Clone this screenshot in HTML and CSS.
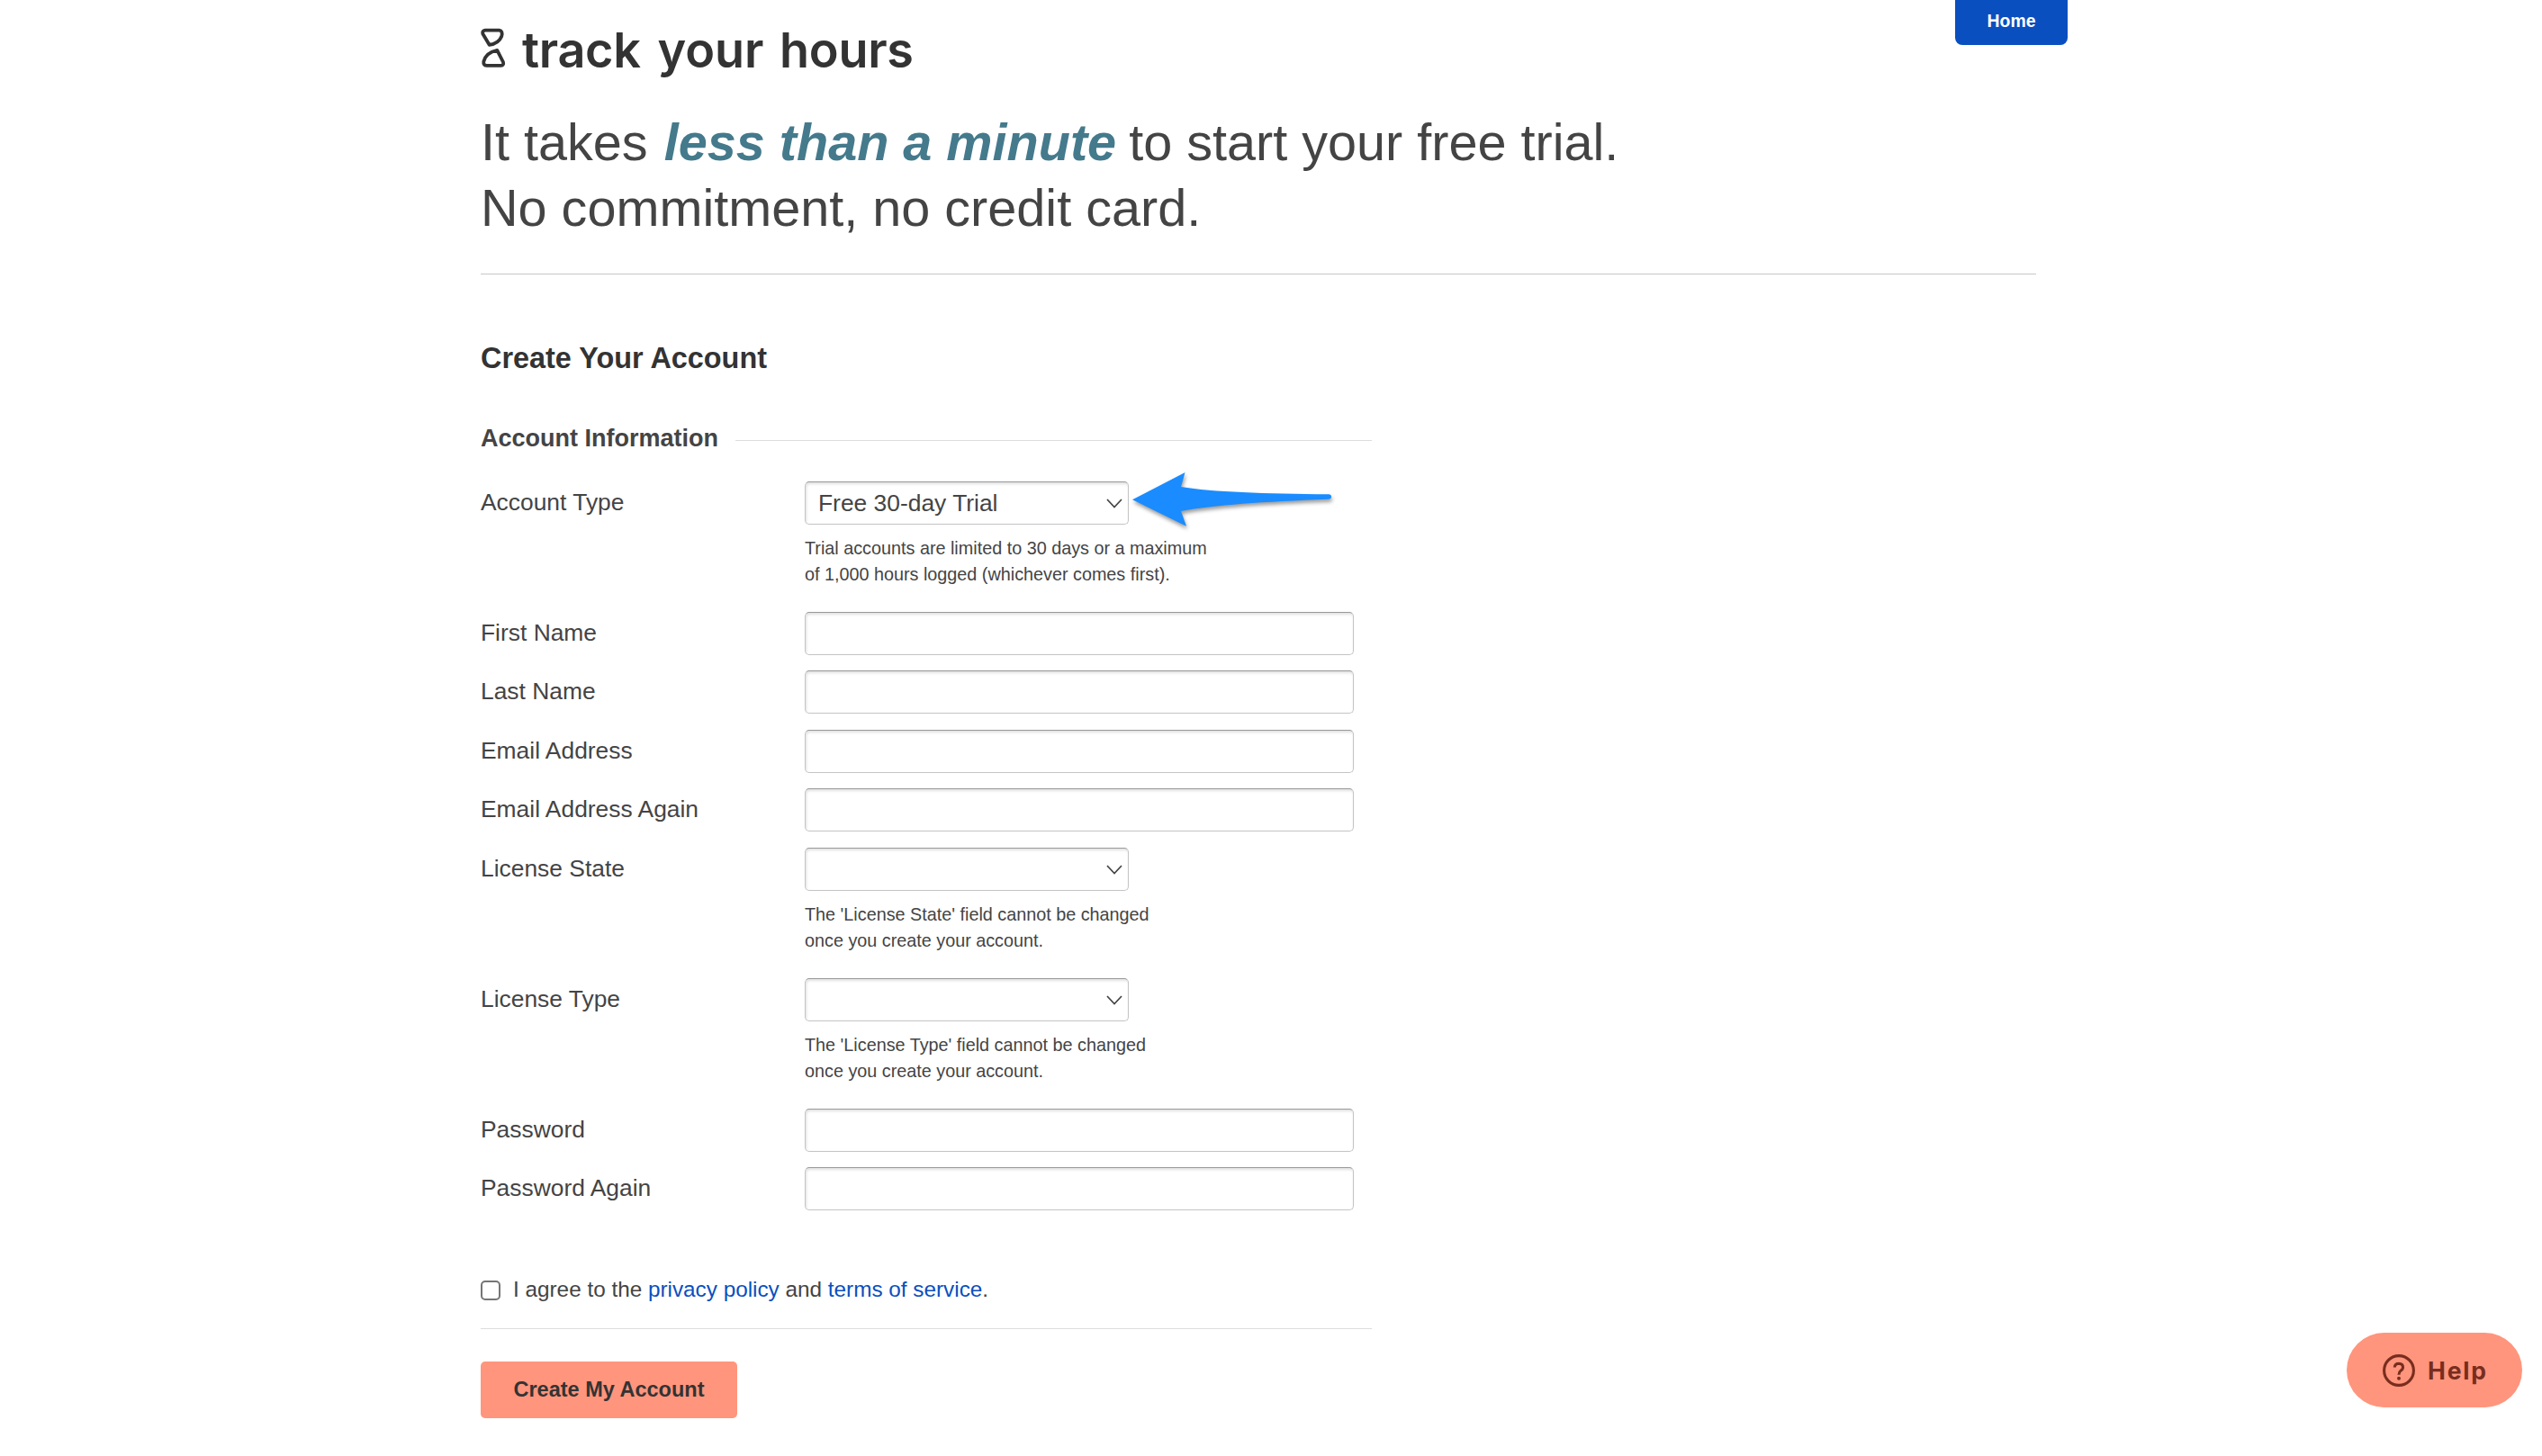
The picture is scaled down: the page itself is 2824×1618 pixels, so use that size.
FILE: index.html
```html
<!DOCTYPE html>
<html lang="en">
<head>
  <meta charset="UTF-8" />
  <title>Track Your Hours - Create Your Account</title>
  <meta name="viewport" content="width=device-width, initial-scale=1" />
  <link rel="stylesheet" href="styles.css">
</head>
<body>
  <div class="container">
    <header>
      <a class="home" href="#">Home</a>
      <svg class="logo" width="490" height="74" viewBox="0 -10 490 74">
        <g fill="none" stroke="#333" stroke-width="3.8" stroke-linejoin="round">
          <path d="M5 5.7H20.5Q25 6.5 23.2 12.5Q20 20.5 9.6 21.8L2.3 9.5Q1.5 6.2 5 5.7Z" />
          <path d="M18.3 27.8L25 41Q26 44.6 22.5 44.9H6.5Q2.8 44.5 3.3 40.5Q5.5 30.5 18.3 27.8Z" />
        </g>
        <text y="46.5"><tspan x="46" textLength="132">track</tspan> <tspan x="196.5" textLength="118">your</tspan> <tspan x="332" textLength="149">hours</tspan></text>
      </svg>
      <h1>It takes <em>less than a minute</em> to start your free trial.<br>No commitment, no credit card.</h1>
    </header>

    <form id="signup-form" action="#" method="POST">
      <h2>Create Your Account</h2>
      <h3>Account Information</h3>

      <div class="row">
        <label for="accounttype">Account Type</label>
        <div class="field">
          <div class="select">
            <select id="accounttype" name="accounttype">
              <option selected>Free 30-day Trial</option>
            </select>
            <svg class="chevron" width="18" height="11" viewBox="0 0 18 11"><path d="M1 1L9 9.5L17 1" /></svg>
            <svg class="arrow" width="236" height="76" viewBox="0 0 236 76">
              <path d="M5 31.3L63.5 1L59 17C95 23 150 24.5 223 25.3Q226 25.5 226 28Q226 30.5 223 30.7C150 33.5 95 37 59 44L65 60.7Z" />
            </svg>
          </div>
          <p class="hint">Trial accounts are limited to 30 days or a maximum<br>of 1,000 hours logged (whichever comes first).</p>
        </div>
      </div>
      <div class="row">
        <label for="firstname">First Name</label>
        <input type="text" id="firstname" name="firstname" />
      </div>
      <div class="row">
        <label for="lastname">Last Name</label>
        <input type="text" id="lastname" name="lastname" />
      </div>
      <div class="row">
        <label for="email">Email Address</label>
        <input type="email" id="email" name="email" />
      </div>
      <div class="row">
        <label for="email2">Email Address Again</label>
        <input type="email" id="email2" name="email2" />
      </div>
      <div class="row">
        <label for="state">License State</label>
        <div class="field">
          <div class="select">
            <select id="state" name="state"><option></option></select>
            <svg class="chevron" width="18" height="11" viewBox="0 0 18 11"><path d="M1 1L9 9.5L17 1" /></svg>
          </div>
          <p class="hint">The 'License State' field cannot be changed<br>once you create your account.</p>
        </div>
      </div>
      <div class="row">
        <label for="licensetype">License Type</label>
        <div class="field">
          <div class="select">
            <select id="licensetype" name="licensetype"><option></option></select>
            <svg class="chevron" width="18" height="11" viewBox="0 0 18 11"><path d="M1 1L9 9.5L17 1" /></svg>
          </div>
          <p class="hint">The 'License Type' field cannot be changed<br>once you create your account.</p>
        </div>
      </div>
      <div class="row">
        <label for="password">Password</label>
        <input type="password" id="password" name="password" />
      </div>
      <div class="row">
        <label for="password2">Password Again</label>
        <input type="password" id="password2" name="password2" />
      </div>

      <div class="agree">
        <input type="checkbox" id="agree" name="agree" />
        <label for="agree">I agree to the <a href="#">privacy policy</a> and <a href="#">terms of service</a>.</label>
      </div>

      <button type="submit">Create My Account</button>
    </form>
  </div>

  <a class="help" href="#">
    <svg width="36" height="36" viewBox="0 0 36 36">
      <circle cx="18" cy="18" r="16.4" />
      <path d="M13.3 14.5Q13.5 10.2 18 10.2Q22.5 10.4 22.5 14.2Q22.5 16.6 20 18.2Q18 19.6 18 22.8" />
      <circle class="dot" cx="18" cy="26.8" r="2" />
    </svg>
    <svg class="help-text" width="66" height="36" viewBox="0 0 66 36"><text x="0" y="28" textLength="65">Help</text></svg>
  </a>
</body>
</html>
```
FILE: styles.css
```css
* {
  box-sizing: border-box;
}
body {
  font-family: "Liberation Sans", Arial, sans-serif;
  background: #fff;
  color: #444;
  margin: 0;
  font-size: 26.4px;
}
h1, h2, h3, p {
  margin: 0;
}
a {
  color: #0a4fbf;
  text-decoration: none;
}
.container {
  width: 1728px;
  margin-left: 534px;
}
header {
  position: relative;
  padding: 18px 0 36px;
  border-bottom: 1px solid #c8c8c8;
}
.home {
  position: absolute;
  top: 0;
  right: -35px;
  width: 125px;
  height: 50px;
  border-radius: 0 0 8px 8px;
  background: #0a4fbf;
  color: #fff;
  font-size: 19.4px;
  font-weight: 700;
  line-height: 47px;
  text-align: center;
}
.logo {
  display: block;
  margin-bottom: 30px;
  overflow: visible;
}
.logo text {
  font-family: Inter, sans-serif;
  font-size: 54px;
  font-weight: 600;
  fill: #333;
}
h1 {
  font-size: 57.6px;
  line-height: 73px;
  font-weight: 400;
}
h1 em {
  margin: 0 -2px 0 2px;
  font-weight: 700;
  color: #447a8c;
}
form {
  width: 990px;
  padding-top: 73px;
}
h2 {
  font-size: 32.4px;
  line-height: 40px;
  color: #333;
}
h3 {
  display: flex;
  align-items: center;
  margin: 52px 0 31px;
  font-size: 27px;
  line-height: 34px;
}
h3::after {
  content: "";
  flex: 1;
  height: 1px;
  margin: 5px 0 0 19px;
  background: #ddd;
}
.row {
  display: flex;
  align-items: flex-start;
  margin-bottom: 17.5px;
}
.row label {
  width: 360px;
  line-height: 46px;
}
.row input,
select {
  appearance: none;
  width: 610px;
  height: 48px;
  margin: 0;
  padding: 0 14px;
  border: 1px solid #c4c4c4;
  border-top-color: #999;
  border-radius: 5px;
  background: #fff;
  box-shadow: inset 1px 2px 3px rgba(0,0,0,0.12);
  color: #444;
  font: inherit;
}
.select {
  position: relative;
  width: 360px;
  height: 48px;
}
.select select {
  width: 360px;
}
.chevron {
  position: absolute;
  right: 7px;
  top: 19px;
  fill: none;
  stroke: #444;
  stroke-width: 1.7;
}
.arrow {
  position: absolute;
  left: 359px;
  top: -11px;
  fill: #1a8cff;
  filter: drop-shadow(1px 3px 2px rgba(0,0,0,0.4));
}
.hint {
  margin: 12px 0 10.3px;
  font-size: 19.8px;
  line-height: 28.6px;
}
.agree {
  display: flex;
  margin-top: 72.5px;
  padding-bottom: 28.5px;
  border-bottom: 1px solid #ddd;
  font-size: 24.3px;
  line-height: 30px;
}
.agree input {
  appearance: none;
  width: 22px;
  height: 22px;
  margin: 5px 14px 0 0;
  border: 2px solid #767676;
  border-radius: 5px;
}
button {
  display: block;
  width: 285px;
  height: 63px;
  margin-top: 36px;
  padding: 0;
  border: none;
  border-radius: 5px;
  background: #ff957d;
  color: #333;
  font-family: inherit;
  font-size: 23.5px;
  font-weight: 700;
  cursor: pointer;
}
.help {
  position: fixed;
  left: 2607px;
  top: 1481px;
  display: flex;
  align-items: center;
  gap: 14px;
  width: 195px;
  height: 83px;
  padding-left: 40px;
  border-radius: 42px;
  background: #ff957d;
  fill: none;
  stroke: #782d1e;
  stroke-width: 3.1;
}
.help .dot,
.help-text {
  fill: #782d1e;
  stroke: none;
}
.help-text text {
  font-family: Inter, sans-serif;
  font-size: 26.5px;
  font-weight: 700;
}
```
